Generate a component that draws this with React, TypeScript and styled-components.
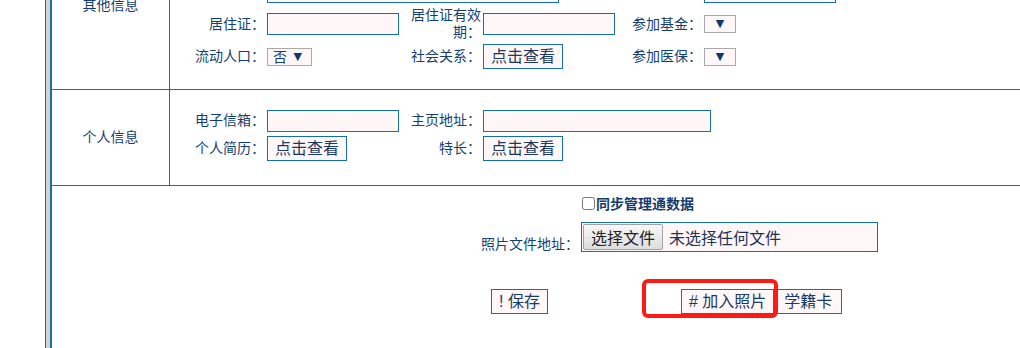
import styled, { createGlobalStyle } from 'styled-components';

const GlobalStyle = createGlobalStyle`
  html, body {
    margin: 0;
    padding: 0;
    background: #fff;
  }
  body {
    font-family: "Liberation Sans", "Noto Sans CJK SC", sans-serif;
    color: #143f72;
    overflow: hidden;
  }
`;

const LINE = '#1570a6';
const FIELD_BG = '#fff7f7';

const Page = styled.div`
  display: flex;
  height: 348px;
  padding-left: 45px;
  overflow: hidden;
`;

const Stripe = styled.div`
  width: 4px;
  flex: none;
  background: #d3d3d3;
  border-left: 1px solid ${LINE};
`;

const Sheet = styled.div`
  flex: 1;
  border-left: 2px solid ${LINE};
  margin-top: -78px;
`;

const Section = styled.div`
  display: grid;
  grid-template-columns: 118px 1fr;
  border-bottom: 1px solid ${LINE};
`;

const SectionTitle = styled.div`
  display: flex;
  align-items: center;
  justify-content: center;
  border-right: 1px solid ${LINE};
  font-size: 14px;
  line-height: 17px;
`;

const FieldArea = styled.div<{ $top: number; $bottom: number }>`
  display: flex;
  flex-direction: column;
  gap: 3px;
  padding: ${(p) => p.$top}px 0 ${(p) => p.$bottom}px;
`;

const Line = styled.div`
  display: grid;
  grid-template-columns: 95px 138px 78px 138px 83px 1fr;
  align-items: center;
  min-height: 25px;
`;

const Label = styled.div`
  font-size: 14px;
  line-height: 17px;
  text-align: right;
`;

const Cell = styled.div<{ $span?: number }>`
  display: flex;
  align-items: center;
  padding-left: 2px;
  grid-column: ${(p) => (p.$span ? `span ${p.$span}` : 'auto')};
`;

const TextBox = styled.input<{ $w: number }>`
  box-sizing: border-box;
  flex: none;
  width: ${(p) => p.$w}px;
  height: 22px;
  margin: 0;
  border: 1px solid ${LINE};
  background: ${FIELD_BG};
  font: inherit;
  font-size: 14px;
  outline: none;
`;

const Picker = styled.div<{ $w: number; $filled: boolean }>`
  box-sizing: border-box;
  flex: none;
  width: ${(p) => p.$w}px;
  height: 18px;
  display: flex;
  align-items: center;
  justify-content: ${(p) => (p.$filled ? 'space-between' : 'center')};
  padding: ${(p) => (p.$filled ? '0 9px 0 5px' : '0')};
  border: 1px solid #aaa;
  background: ${FIELD_BG};
  font-size: 14px;
  line-height: 16px;
  color: #143f72;
`;

const Arrow = styled.span`
  font-family: "DejaVu Sans", sans-serif;
  font-size: 11px;
  line-height: 16px;
  color: #0c3a72;
`;

const Button = styled.button`
  box-sizing: border-box;
  height: 25px;
  margin: 0;
  padding: 0 7px;
  border: 1px solid ${LINE};
  background: ${FIELD_BG};
  font-family: "Liberation Sans", "Noto Sans CJK SC", sans-serif;
  font-size: 16px;
  line-height: 21px;
  color: #1a3a66;
  cursor: pointer;
  white-space: nowrap;
`;

const WideButton = styled(Button)`
  padding: 0 9px;
`;

const BottomArea = styled.div`
  display: flex;
  flex-direction: column;
  padding-top: 7px;
`;

const BottomLine = styled.div<{ $space?: number }>`
  display: grid;
  grid-template-columns: 529px 1fr;
  margin-top: ${(p) => p.$space ?? 0}px;
`;

const CheckLabel = styled.label`
  display: flex;
  align-items: center;
  height: 20px;
  font-size: 14px;
  font-weight: bold;
  color: #153c6a;
`;

const Check = styled.input`
  width: 13px;
  height: 13px;
  margin: 0 1px 0 1px;
`;

const FileLabel = styled.div`
  align-self: end;
  justify-self: end;
  margin-right: 2px;
  font-size: 14px;
  line-height: 15px;
`;

const FileBox = styled.div`
  box-sizing: border-box;
  width: 297px;
  height: 30px;
  display: flex;
  align-items: center;
  padding: 0 1px;
  border: 1px solid ${LINE};
  background: ${FIELD_BG};
`;

const FileButton = styled.button`
  box-sizing: border-box;
  width: 80px;
  height: 26px;
  margin: 0;
  padding: 0;
  border: 1px solid #a3a3a3;
  border-radius: 2px;
  background: linear-gradient(#f7f7f7, #dddddd);
  font-family: "Noto Sans CJK SC", sans-serif;
  font-size: 16px;
  line-height: 24px;
  color: #222;
`;

const FileName = styled.span`
  margin-left: 6px;
  font-size: 16px;
  color: #1d3358;
`;

const SaveSlot = styled.div`
  justify-self: end;
  margin-right: 33px;
`;

const ActionGroup = styled.div`
  display: flex;
  margin-left: 100px;
`;

const Marked = styled.span`
  position: relative;
  display: inline-flex;
`;

const Highlight = styled.span`
  position: absolute;
  inset: -10px -4px -4px -39px;
  border: 4px solid #ff1a14;
  border-radius: 6px;
  pointer-events: none;
`;

type Field =
  | { kind: 'text'; w: number }
  | { kind: 'pick'; w: number; value?: string }
  | { kind: 'button'; text: string };

function Control({ field }: { field: Field }) {
  if (field.kind === 'text') return <TextBox $w={field.w} readOnly />;
  if (field.kind === 'pick')
    return (
      <Picker $w={field.w} $filled={!!field.value}>
        {field.value && <span>{field.value}</span>}
        <Arrow>▼</Arrow>
      </Picker>
    );
  return <Button>{field.text}</Button>;
}

type Pair = { label: string; field: Field; span?: number };

function FormLine({ pairs }: { pairs: Pair[] }) {
  return (
    <Line>
      {pairs.map((p, i) => [
        <Label key={`l${i}`}>{p.label}</Label>,
        <Cell key={`c${i}`} $span={p.span}>
          <Control field={p.field} />
        </Cell>,
      ])}
    </Line>
  );
}

const otherInfo: Pair[][] = [
  [
    { label: '户籍所在地详细地址：', field: { kind: 'text', w: 132 } },
    { label: '籍贯：', field: { kind: 'text', w: 132 } },
    { label: '民族：', field: { kind: 'pick', w: 32 } },
  ],
  [
    { label: '家庭住址：', field: { kind: 'text', w: 292 }, span: 3 },
    { label: '健康状况：', field: { kind: 'text', w: 132 } },
  ],
  [
    { label: '居住证：', field: { kind: 'text', w: 132 } },
    { label: '居住证有效期：', field: { kind: 'text', w: 132 } },
    { label: '参加基金：', field: { kind: 'pick', w: 32 } },
  ],
  [
    { label: '流动人口：', field: { kind: 'pick', w: 45, value: '否' } },
    { label: '社会关系：', field: { kind: 'button', text: '点击查看' } },
    { label: '参加医保：', field: { kind: 'pick', w: 32 } },
  ],
];

const personalInfo: Pair[][] = [
  [
    { label: '电子信箱：', field: { kind: 'text', w: 132 } },
    { label: '主页地址：', field: { kind: 'text', w: 228 } },
  ],
  [
    { label: '个人简历：', field: { kind: 'button', text: '点击查看' } },
    { label: '特长：', field: { kind: 'button', text: '点击查看' } },
  ],
];

export default function App() {
  return (
    <>
      <GlobalStyle />
      <Page>
        <Stripe />
        <Sheet>
          <Section>
            <SectionTitle>其他信息</SectionTitle>
            <FieldArea $top={20} $bottom={20}>
              {otherInfo.map((pairs, i) => (
                <FormLine key={i} pairs={pairs} />
              ))}
            </FieldArea>
          </Section>
          <Section>
            <SectionTitle>个人信息</SectionTitle>
            <FieldArea $top={18} $bottom={24}>
              {personalInfo.map((pairs, i) => (
                <FormLine key={i} pairs={pairs} />
              ))}
            </FieldArea>
          </Section>
          <BottomArea>
            <BottomLine>
              <div />
              <CheckLabel>
                <Check type="checkbox" />
                同步管理通数据
              </CheckLabel>
            </BottomLine>
            <BottomLine $space={9}>
              <FileLabel>照片文件地址：</FileLabel>
              <FileBox>
                <FileButton>选择文件</FileButton>
                <FileName>未选择任何文件</FileName>
              </FileBox>
            </BottomLine>
            <BottomLine $space={37}>
              <SaveSlot>
                <Button>! 保存</Button>
              </SaveSlot>
              <ActionGroup>
                <Marked>
                  <Button># 加入照片</Button>
                  <Highlight />
                </Marked>
                <WideButton>学籍卡</WideButton>
              </ActionGroup>
            </BottomLine>
          </BottomArea>
        </Sheet>
      </Page>
    </>
  );
}
